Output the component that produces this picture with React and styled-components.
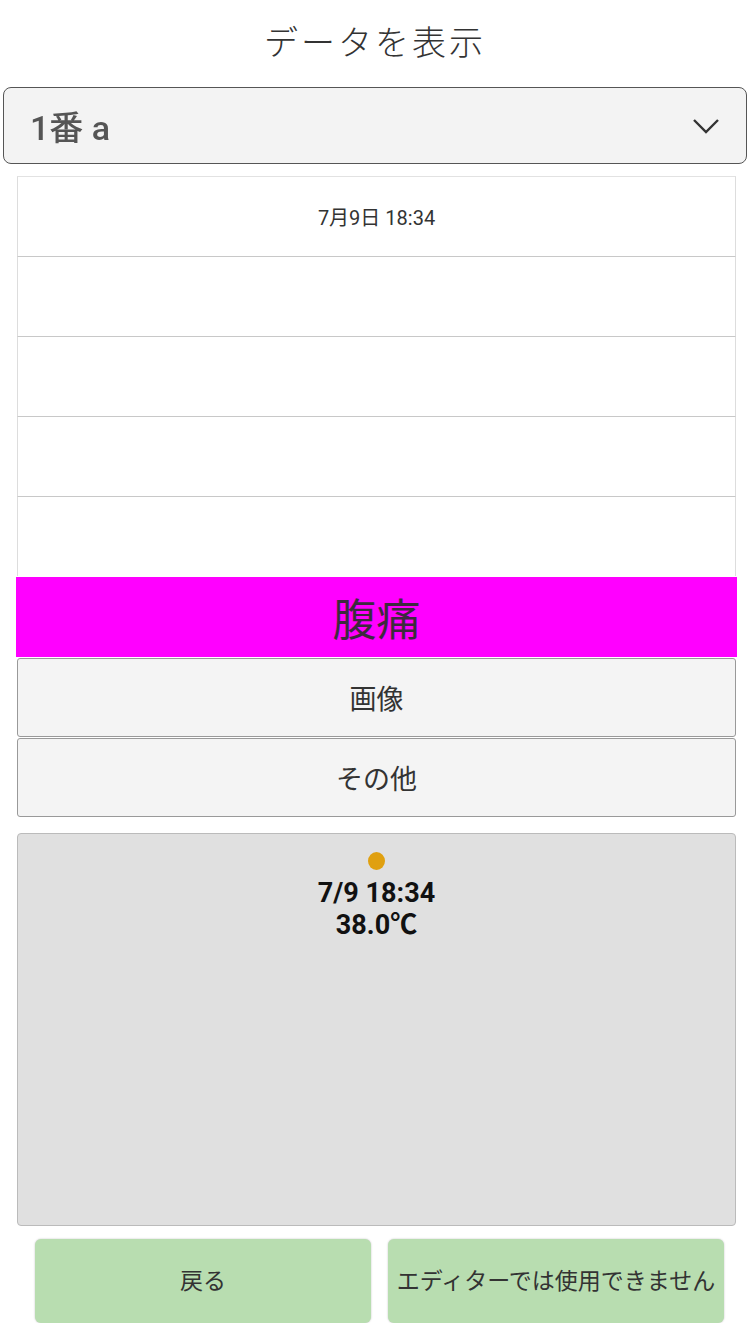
import React from 'react';
import styled, {createGlobalStyle} from 'styled-components';

const GlobalStyle = createGlobalStyle`
  body {
    margin: 0;
    background: #fff;
    font-family: Roboto, "Noto Sans CJK JP", sans-serif;
    color: #333;
  }
`;

const rows = ['7月9日 18:34', '', '', '', ''];

const App = () => {
  return (
    <Page>
      <GlobalStyle />
      <Title>データを表示</Title>
      <Select>
        <span className="value">1番 a</span>
        <svg width="28" height="16" viewBox="0 0 28 16">
          <path d="M2 2 L14 14 L26 2" fill="none" stroke="#333" strokeWidth="2.4" />
        </svg>
      </Select>
      <List>
        {rows.map((text, i) => (
          <Row key={i}>{text}</Row>
        ))}
      </List>
      <Symptom>腹痛</Symptom>
      <Option>画像</Option>
      <Option>その他</Option>
      <Chart>
        <Dot />
        <ChartLabel>
          7/9 18:34
          <br />
          38.0℃
        </ChartLabel>
      </Chart>
      <Footer>
        <ActionButton>戻る</ActionButton>
        <ActionButton>エディターでは使用できません</ActionButton>
      </Footer>
    </Page>
  );
};

const Page = styled.main`
  width: 750px;
  display: flex;
  flex-direction: column;
`;

const Title = styled.h1`
  margin: 0;
  height: 87px;
  padding-bottom: 6px;
  box-sizing: border-box;
  display: flex;
  align-items: center;
  justify-content: center;
  font-family: "Noto Sans CJK JP", sans-serif;
  font-weight: 300;
  font-size: 34px;
  letter-spacing: 3px;
  color: #333;
`;

const Select = styled.div`
  margin: 0 3px;
  height: 77px;
  box-sizing: border-box;
  border: 1px solid #555;
  border-radius: 8px;
  background: #f3f3f3;
  display: flex;
  align-items: center;
  justify-content: space-between;
  padding: 0 26px 0 26px;
  .value {
    font-size: 34px;
    font-weight: 500;
    color: #555;
    filter: blur(0.7px);
  }
`;

const List = styled.div`
  margin: 12px 14px 0 17px;
  display: flex;
  flex-direction: column;
`;

const Row = styled.div`
  height: 80px;
  box-sizing: border-box;
  border: 1px solid #ddd;
  border-top-color: #c8c8c8;
  border-bottom: none;
  display: flex;
  align-items: center;
  justify-content: center;
  font-size: 20px;
  color: #333;
  &:first-child {
    border-top-color: #e2e2e2;
  }
`;

const Symptom = styled.div`
  margin: 1px 13px 0 16px;
  height: 80px;
  background: #ff00ff;
  display: flex;
  align-items: center;
  justify-content: center;
  font-size: 44px;
  color: #3d2a3d;
`;

const Option = styled.div`
  margin: 1px 14px 0 17px;
  height: 79px;
  box-sizing: border-box;
  border: 1px solid #999;
  border-radius: 3px;
  background: #f4f4f4;
  display: flex;
  align-items: center;
  justify-content: center;
  font-size: 27px;
  color: #333;
`;

const Chart = styled.div`
  margin: 16px 14px 0 17px;
  height: 393px;
  box-sizing: border-box;
  border: 1px solid #bbb;
  border-radius: 4px;
  background: #e0e0e0;
  display: flex;
  flex-direction: column;
  align-items: center;
  padding-top: 18px;
`;

const Dot = styled.div`
  width: 17px;
  height: 18px;
  border-radius: 50%;
  background: #e0a010;
`;

const ChartLabel = styled.div`
  margin-top: 7px;
  font-weight: 700;
  font-size: 27px;
  line-height: 32px;
  color: #111;
  text-align: center;
`;

const Footer = styled.div`
  margin: 13px 26px 0 35px;
  display: grid;
  grid-template-columns: 336px 336px;
  gap: 17px;
`;

const ActionButton = styled.button`
  height: 84px;
  border: none;
  border-radius: 6px;
  background: #b8ddb0;
  box-shadow: 0 0 2px rgba(0, 0, 0, 0.25);
  font-family: Roboto, "Noto Sans CJK JP", sans-serif;
  font-size: 23px;
  color: #333;
  padding: 0 0 5px;
  white-space: nowrap;
`;

export default App;
